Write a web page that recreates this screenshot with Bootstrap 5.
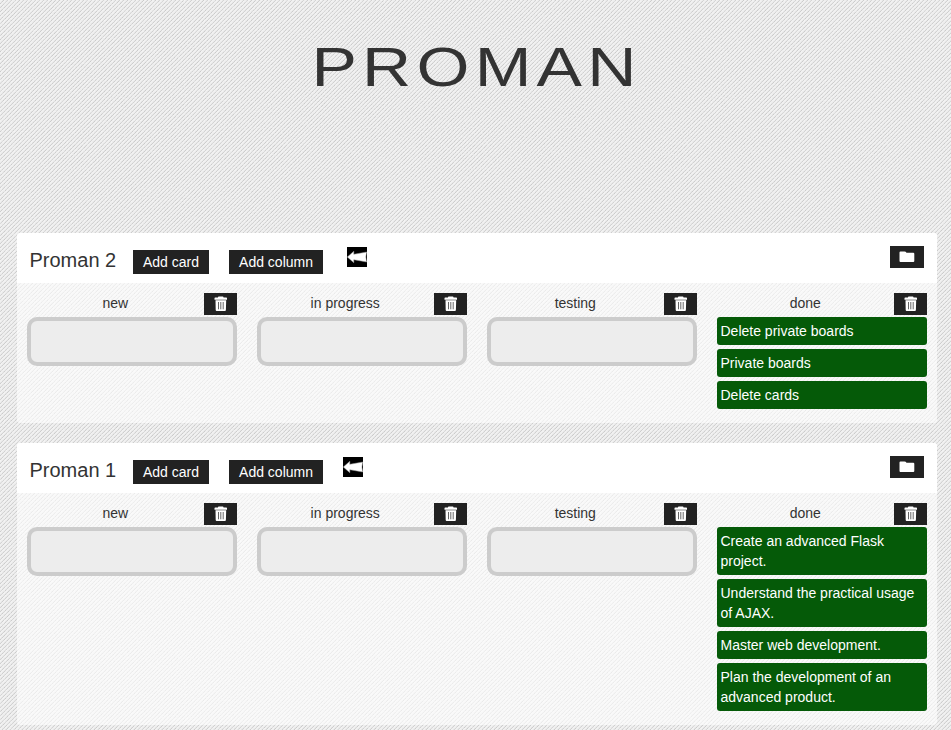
<!DOCTYPE html>
<html lang="en">
<head>
<meta charset="utf-8">
<title>ProMan</title>
<link href="https://cdn.jsdelivr.net/npm/bootstrap@5.3.0/dist/css/bootstrap.min.css" rel="stylesheet">
<style>
body{font-family:"Liberation Sans",Arial,sans-serif;font-size:14px;line-height:20px;color:#333;overflow:hidden;
 background:url("data:image/svg+xml,%3Csvg xmlns='http://www.w3.org/2000/svg' width='200' height='200'%3E%3Cfilter id='n' x='0' y='0' width='100%25' height='100%25'%3E%3CfeTurbulence type='fractalNoise' baseFrequency='.7' numOctaves='2' stitchTiles='stitch'/%3E%3CfeColorMatrix values='0 0 0 0 1 0 0 0 0 1 0 0 0 0 1 1.600 0 0 0 -.5'/%3E%3C/filter%3E%3Crect width='200' height='200' filter='url(%23n)' opacity='.5'/%3E%3C/svg%3E"),
 url("data:image/svg+xml,%3Csvg xmlns='http://www.w3.org/2000/svg' width='4' height='4' shape-rendering='crispEdges'%3E%3Cpath fill='%23eeeeee' d='M0 0h4v4H0z'/%3E%3Cpath fill='%23cbcbcb' d='M3 0h1v1H3zM2 1h1v1H2zM1 2h1v1H1zM0 3h1v1H0z'/%3E%3Cpath fill='%23e5e5e5' d='M2 0h1v1H2zM1 1h1v1H1zM0 2h1v1H0zM3 3h1v1H3z'/%3E%3C/svg%3E")}
.masthead{height:233px;padding-top:34px}
.masthead h1{display:inline-block;font-size:55.5px;line-height:66px;font-weight:400;letter-spacing:4.2px;transform:scaleX(1.228);margin:0;padding-left:1px;color:#333}
.boards{width:920px;margin-left:17px}
.board{border-radius:3px;background:rgba(255,255,255,.6);margin-bottom:20px;overflow:hidden}
.board-a{height:190px}
.board-b{height:282px}
.board-head{height:50px;background:#fff;padding:0 13px 0 12.5px}
.board-name{font-size:20px;line-height:24px;width:103.5px;margin-top:15px}
.dark-btn{background:#222;color:#fff;border:0;border-radius:0;font-size:14px;line-height:20px;padding:2px 10px;height:24px;margin-top:17px}
.icon-btn{background:#222;color:#fff;border:0;border-radius:0;padding:0;width:33px;height:22px;display:flex;align-items:center;justify-content:center}
.folder-btn{width:34px;margin-top:13px}
.folder-btn svg{margin-right:1px}
.arrow{width:20px;height:20px;margin:14px 0 0 24px}
.arrow-b{margin-left:20px}
.lane{width:230px;padding:10px}
.lane-title{height:24px}
.lane-title span{width:177px;text-align:center;padding-right:.5px}
.drop{height:49px;border:4px solid #ccc;border-radius:10px;background:#ededed}
.task{background:#055a08;color:#fff;border-radius:3px;padding:4px 4px 4px 3.5px;margin-bottom:4px}
</style>
</head>
<body>
<svg class="d-none">
<symbol id="trash" viewBox="0 0 14 16"><path fill="#fff" d="M4 2V1.300Q4 .6 4.700 .6h4Q9.500 .6 9.500 1.300V1.500H12.300q.7 0 .7.700V3.700H.5V2.200q0-.7.700-.700H4zM1.500 4.200h10.700l-.3 9.800q0 1-1 1H2.700q-1 0-1-1z"/><path stroke="#555" stroke-width=".9" d="M4.500 6v7.300M6.800 6v7.300M9.200 6v7.300" fill="none"/></symbol>
<symbol id="folder" viewBox="0 0 16 12"><path fill="#fff" d="M.5 1.500Q.5 .5 1.500 .5H5.500Q6.800 .5 7.500 1.700h6.700Q15.300 1.700 15.300 2.800v7.200q0 1-1 1H1.500q-1 0-1-1z"/></symbol>
<symbol id="back" viewBox="0 0 20 20"><path fill="#000" d="M0 0h20v20H0z"/><path fill="#fff" stroke="#999" stroke-width=".5" d="M.3 10L6.800 4.300V7.300L19.800 5Q18 10 19.800 15L6.800 12.700V15.700z"/></symbol>
</svg>
<header class="masthead text-center"><h1>PROMAN</h1></header>
<main class="boards">
<section class="board board-a">
 <div class="board-head d-flex align-items-start">
  <div class="board-name">Proman 2</div><button class="dark-btn me-3">Add card</button><button class="dark-btn ms-1">Add column</button>
  <svg class="arrow"><use href="#back"/></svg>
  <button class="icon-btn folder-btn ms-auto" aria-label="Toggle"><svg width="16" height="12"><use href="#folder"/></svg></button>
 </div>
 <div class="d-flex align-items-start">
  <div class="lane"><div class="lane-title d-flex"><span>new</span><button class="icon-btn"><svg width="14" height="16"><use href="#trash"/></svg></button></div><div class="drop"></div></div>
  <div class="lane"><div class="lane-title d-flex"><span>in progress</span><button class="icon-btn"><svg width="14" height="16"><use href="#trash"/></svg></button></div><div class="drop"></div></div>
  <div class="lane"><div class="lane-title d-flex"><span>testing</span><button class="icon-btn"><svg width="14" height="16"><use href="#trash"/></svg></button></div><div class="drop"></div></div>
  <div class="lane"><div class="lane-title d-flex"><span>done</span><button class="icon-btn"><svg width="14" height="16"><use href="#trash"/></svg></button></div>
   <div class="task">Delete private boards</div><div class="task">Private boards</div><div class="task">Delete cards</div></div>
 </div>
</section>
<section class="board board-b">
 <div class="board-head d-flex align-items-start">
  <div class="board-name">Proman 1</div><button class="dark-btn me-3">Add card</button><button class="dark-btn ms-1">Add column</button>
  <svg class="arrow arrow-b"><use href="#back"/></svg>
  <button class="icon-btn folder-btn ms-auto" aria-label="Toggle"><svg width="16" height="12"><use href="#folder"/></svg></button>
 </div>
 <div class="d-flex align-items-start">
  <div class="lane"><div class="lane-title d-flex"><span>new</span><button class="icon-btn"><svg width="14" height="16"><use href="#trash"/></svg></button></div><div class="drop"></div></div>
  <div class="lane"><div class="lane-title d-flex"><span>in progress</span><button class="icon-btn"><svg width="14" height="16"><use href="#trash"/></svg></button></div><div class="drop"></div></div>
  <div class="lane"><div class="lane-title d-flex"><span>testing</span><button class="icon-btn"><svg width="14" height="16"><use href="#trash"/></svg></button></div><div class="drop"></div></div>
  <div class="lane"><div class="lane-title d-flex"><span>done</span><button class="icon-btn"><svg width="14" height="16"><use href="#trash"/></svg></button></div>
   <div class="task">Create an advanced Flask project.</div><div class="task">Understand the practical usage of AJAX.</div><div class="task">Master web development.</div><div class="task">Plan the development of an advanced product.</div></div>
 </div>
</section>
</main>
<script src="https://cdn.jsdelivr.net/npm/bootstrap@5.3.0/dist/js/bootstrap.bundle.min.js"></script>
</body>
</html>
